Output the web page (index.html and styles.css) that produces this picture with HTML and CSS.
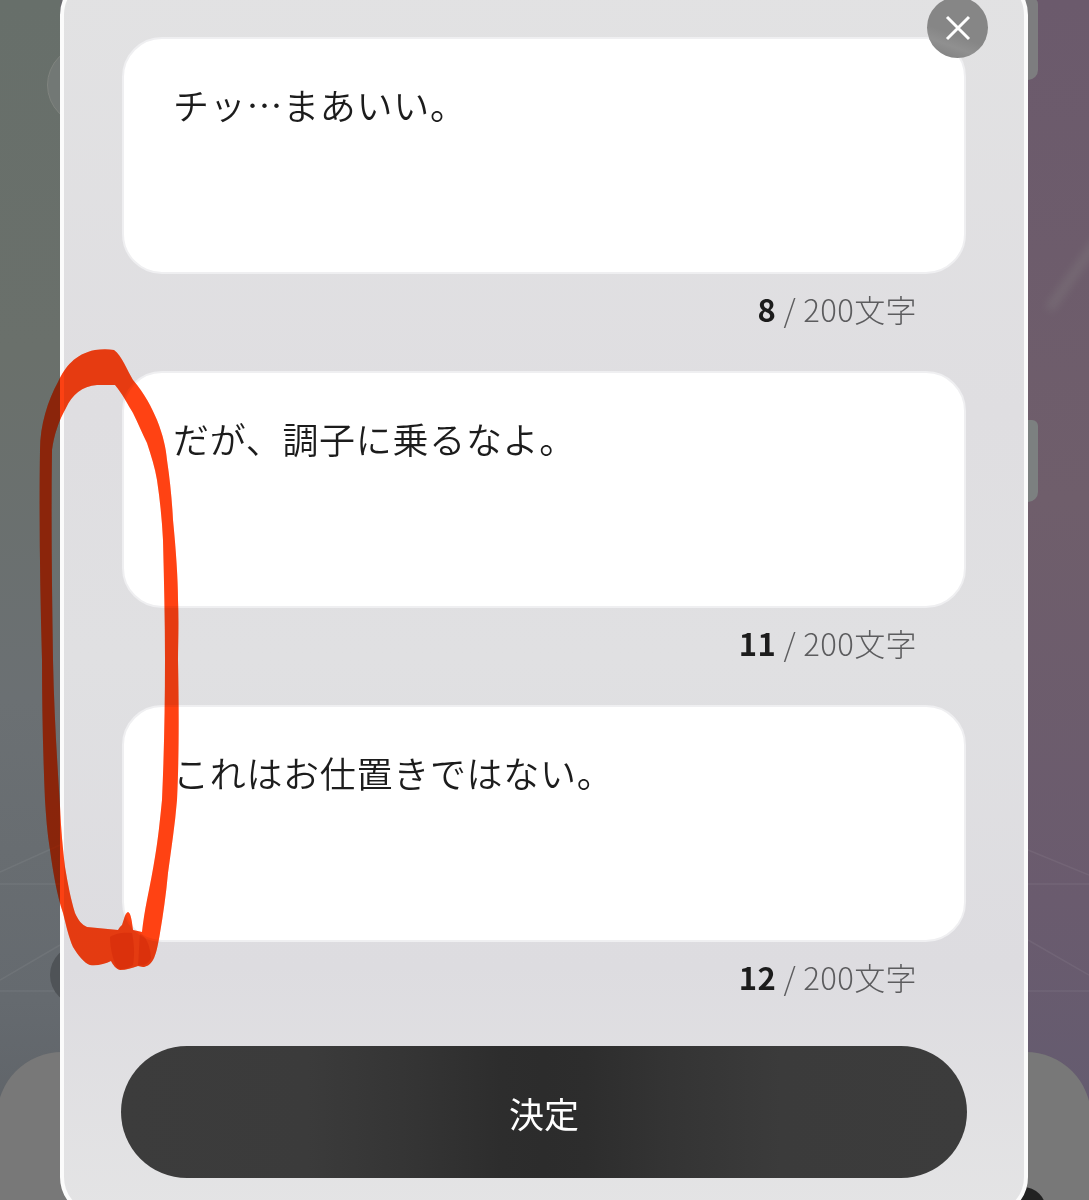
FILE: index.html
```html
<!DOCTYPE html>
<html lang="ja">
<head>
<meta charset="utf-8">
<title>決定</title>
<link rel="stylesheet" href="styles.css">
</head>
<body>
<div class="stage">
  <div class="backdrop">
    <svg class="lines" width="1089" height="1200" viewBox="0 0 1089 1200">
      <path d="M0 872L60 845M0 884H60M0 980L60 945M0 991H60M1028 850L1089 875M1028 884H1089M1028 940L1089 975M1028 991H1089" fill="none" stroke="#fff" stroke-opacity=".06" stroke-width="1.5"/>
    </svg>
    <div class="bg-streak"></div>
    <div class="bg-circle"></div>
    <div class="bg-pill"></div>
    <div class="bg-tab bg-tab-top"></div>
    <div class="bg-tab bg-tab-mid"></div>
    <div class="bg-panel bg-panel-left"></div>
    <div class="bg-panel bg-panel-right"></div>
    <div class="bg-dark"></div>
  </div>

  <div class="modal">
    <button class="close" aria-label="閉じる">
      <svg width="30" height="30" viewBox="0 0 30 30"><path d="M4 4L26 26M26 4L4 26" fill="none" stroke="#fff" stroke-width="3"/></svg>
    </button>

    <div class="field">チッ…まあいい。</div>
    <p class="count"><b>8</b> / 200文字</p>

    <div class="field">だが、調子に乗るなよ。</div>
    <p class="count"><b>11</b> / 200文字</p>

    <div class="field">これはお仕置きではない。</div>
    <p class="count"><b>12</b> / 200文字</p>

    <button class="submit">決定</button>
  </div>

  <svg class="scribble scribble-base" width="1089" height="1200" viewBox="0 0 1089 1200">
    <path id="stroke" fill="#ff4213" fill-rule="evenodd" d="M95 350C102 349 108 349 114 350C122 356 127 370 133 380C145 394 152 408 157 420C163 435 166 448 167 460C170 480 172 500 173 520C176 550 178 580 178 600C179 625 178 645 178 660C179 710 179 760 177 800C175 825 171 850 168 873C166 895 163 915 160 933C158 945 156 955 153 960C150 965 146 967 143 967L138 966C132 968 126 970 120 970C116 969 113 965 111 961C105 964 97 966 90 965C84 963 78 955 73 947C69 938 66 925 63 913C57 895 53 872 50 850C47 832 46 815 45 800C43 755 42 705 42 660C40 590 39 515 40 450C40 425 48 400 58 382C65 367 75 354 95 350ZM97 385C82 386 72 395 66 408C59 420 54 435 52 450C51 520 52 590 53 660C54 710 57 760 60 806C61 830 63 850 65 867C68 885 71 900 75 913C78 920 82 925 87 927L118 930C119 928 120 927 122 925C124 920 125 913 128 912C131 913 132 922 133 930L142 932C143 922 145 910 147 900C150 885 153 870 155 857C158 840 160 820 162 800C164 755 165 710 165 660C165 620 164 580 163 540C162 520 160 500 157 480C155 468 151 455 147 443C142 433 138 423 133 413C128 405 122 393 115 385Z"/>
    <path fill="#e82c08" fill-opacity=".6" d="M110 937C115 933 125 932 132 933C134 942 135 955 133 965C128 969 121 970 117 968C113 960 110 948 110 937ZM140 934C146 936 150 945 151 958C148 965 143 966 138 965C139 955 139 944 140 934Z"/>
  </svg>
  <svg class="scribble scribble-tint" width="1089" height="1200" viewBox="0 0 1089 1200">
    <use href="#stroke"/>
  </svg>
</div>
</body>
</html>
```

FILE: styles.css
```css
* { box-sizing: border-box; }

html, body {
  margin: 0;
  padding: 0;
  height: 1200px;
  overflow: hidden;
}

body {
  font-family: "Noto Sans CJK JP", "Noto Sans", sans-serif;
  color: #1c1c1c;
}

.stage {
  position: relative;
  width: 1089px;
  height: 1200px;
  overflow: hidden;
  background:
    linear-gradient(to bottom, #676f6a 0, #6a706b 350px, #6b7073 700px, #656a6f 1000px, #5c6065 1200px) left / 60px 100% no-repeat,
    linear-gradient(to bottom, #6b5a6c 0, #6f5e6b 500px, #6a5b6e 900px, #625c70 1200px) right / 61px 100% no-repeat,
    #6a6a6e;
}

.backdrop {
  position: absolute;
  inset: 0;
}

.lines {
  position: absolute;
  inset: 0;
}

.bg-streak {
  position: absolute;
  left: 1030px;
  top: 268px;
  width: 90px;
  height: 9px;
  background: #8a8a88;
  opacity: .3;
  filter: blur(4px);
  transform: rotate(-55deg);
}

.bg-circle {
  position: absolute;
  left: 47px;
  top: 45px;
  width: 80px;
  height: 80px;
  border-radius: 50%;
  background: #727875;
  border: 1px solid #80847f;
}

.bg-pill {
  position: absolute;
  left: 50px;
  top: 945px;
  width: 60px;
  height: 60px;
  border-radius: 30px;
  background: #4f5357;
}

.bg-tab {
  position: absolute;
  left: 1000px;
  width: 38px;
  height: 82px;
  border-radius: 0 6px 10px 0;
  background: #7d7d7f;
}

.bg-tab-top { top: -2px; }
.bg-tab-mid { top: 420px; background: #7c8080; }

.bg-panel {
  position: absolute;
  top: 1052px;
  width: 200px;
  height: 220px;
  border-radius: 65px;
  background: #787878;
}

.bg-panel-left { left: -3px; }
.bg-panel-right { left: 891px; }

.bg-dark {
  position: absolute;
  left: 1000px;
  top: 1187px;
  width: 46px;
  height: 46px;
  border-radius: 50%;
  background: #222;
}

.modal {
  position: absolute;
  left: 60px;
  top: -25px;
  width: 968px;
  height: 1242px;
  padding: 58px 58px 35px;
  border: 4px solid #fbfbfb;
  border-radius: 40px;
  background:
    linear-gradient(to bottom, #e2e2e3 0, #dfdee1 35%, #e0e0e2 55%, #dddce0 80%, #e4e4e5 100%);
}

.close {
  position: absolute;
  left: 863px;
  top: 18px;
  display: flex;
  align-items: center;
  justify-content: center;
  width: 61px;
  height: 61px;
  padding: 0;
  border: 0;
  border-radius: 50%;
  background: linear-gradient(200deg, #868686 60%, #909090 75%, #848484 90%);
}

.field {
  height: 237px;
  padding: 38px 49px;
  border: 2px solid #efeff1;
  border-radius: 40px;
  background: #fff;
  font-size: 36px;
  line-height: 54px;
  letter-spacing: .7px;
  font-weight: 350;
}

.count {
  height: 97px;
  margin: 0;
  padding: 14px 49px 0 0;
  text-align: right;
  font-size: 31px;
  line-height: 42px;
  letter-spacing: .4px;
  font-weight: 300;
  color: #5c5c5e;
}

.count b {
  font-weight: 700;
  color: #1c1c1c;
}

.count:last-of-type {
  height: 104px;
}

.submit {
  display: block;
  width: 846px;
  height: 132px;
  margin: 0 -1px;
  padding: 0;
  border: 0;
  border-radius: 66px;
  background: linear-gradient(to right, #3c3c3c 0, #3b3b3b 22%, #343434 35%, #2d2d2d 45%, #2c2c2c 50%, #2d2d2d 55%, #343434 65%, #3b3b3b 78%, #3c3c3c 100%);
  color: #fff;
  font-family: inherit;
  font-size: 35px;
  font-weight: 400;
}

.scribble {
  position: absolute;
  inset: 0;
  pointer-events: none;
}

.scribble-base { mix-blend-mode: multiply; }
.scribble-tint { opacity: .22; }
```
